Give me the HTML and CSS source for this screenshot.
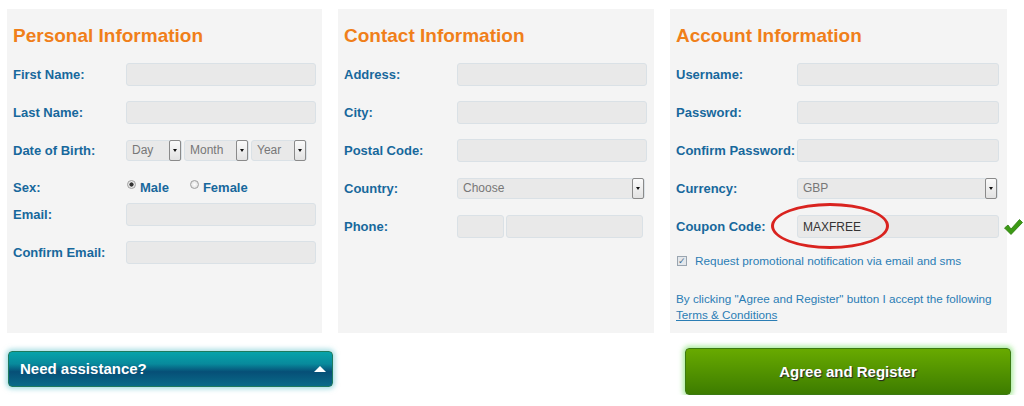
FILE: index.html
```html
<!DOCTYPE html>
<html>
<head>
  <title>Register</title>
  <link rel="stylesheet" href="styles.css">
</head>
<body>
  <div class="page">
    <div class="columns">

      <div class="panel">
        <h2>Personal Information</h2>
        <div class="row">
          <label>First Name:</label>
          <input type="text" class="field">
        </div>
        <div class="row">
          <label>Last Name:</label>
          <input type="text" class="field">
        </div>
        <div class="row">
          <label>Date of Birth:</label>
          <div class="dob">
            <div class="select day"><span class="value">Day</span><span class="arrow"></span></div>
            <div class="select month"><span class="value">Month</span><span class="arrow"></span></div>
            <div class="select year"><span class="value">Year</span><span class="arrow"></span></div>
          </div>
        </div>
        <div class="row sex">
          <label>Sex:</label>
          <div class="radios">
            <span class="radio checked"></span><span class="radio-label">Male</span>
            <span class="radio"></span><span class="radio-label">Female</span>
          </div>
        </div>
        <div class="row">
          <label>Email:</label>
          <input type="text" class="field">
        </div>
        <div class="row">
          <label>Confirm Email:</label>
          <input type="text" class="field">
        </div>
      </div>

      <div class="panel">
        <h2>Contact Information</h2>
        <div class="row">
          <label>Address:</label>
          <input type="text" class="field">
        </div>
        <div class="row">
          <label>City:</label>
          <input type="text" class="field">
        </div>
        <div class="row">
          <label>Postal Code:</label>
          <input type="text" class="field">
        </div>
        <div class="row">
          <label>Country:</label>
          <div class="select wide"><span class="value">Choose</span><span class="arrow"></span></div>
        </div>
        <div class="row">
          <label>Phone:</label>
          <div class="phone">
            <input type="text" class="field code">
            <input type="text" class="field number">
          </div>
        </div>
      </div>

      <div class="panel account">
        <h2>Account Information</h2>
        <div class="row">
          <label>Username:</label>
          <input type="text" class="field">
        </div>
        <div class="row">
          <label>Password:</label>
          <input type="password" class="field">
        </div>
        <div class="row">
          <label>Confirm Password:</label>
          <input type="password" class="field">
        </div>
        <div class="row">
          <label>Currency:</label>
          <div class="select wide"><span class="value">GBP</span><span class="arrow"></span></div>
        </div>
        <div class="row coupon">
          <label>Coupon Code:</label>
          <input type="text" class="field" value="MAXFREE">
          <span class="circle"></span>
          <svg class="tick" width="20" height="18" viewBox="0 0 20 18">
            <path d="M1.5 10 L5 7 L8 11 L16.5 1.5 L19.5 4.5 L8 16.5 Z" fill="#3c9a14" stroke="#2a7a0c" stroke-width="0.8" stroke-linejoin="round"/>
          </svg>
        </div>
        <div class="optin">
          <span class="checkbox">&#10003;</span>
          <span>Request promotional notification via email and sms</span>
        </div>
        <p class="terms">
          By clicking "Agree and Register" button I accept the following<br>
          <a href="#">Terms &amp; Conditions</a>
        </p>
      </div>

    </div>

    <div class="actions">
      <div class="assist">
        <span>Need assistance?</span>
        <span class="up"></span>
      </div>
      <button class="register">Agree and Register</button>
    </div>
  </div>
</body>
</html>
```

FILE: styles.css
```css
body {
  margin: 0;
  font-family: "Liberation Sans", Arial, sans-serif;
  background: #fff;
}

.page {
  padding: 9px 0 0 7px;
}

.columns {
  display: grid;
  grid-template-columns: 315px 316px 337px;
  column-gap: 16px;
}

.panel {
  height: 324px;
  box-sizing: border-box;
  padding: 15px 6px 0 6px;
  background: #f4f4f4;
}

h2 {
  margin: 0 0 15px 0;
  font-size: 19px;
  line-height: 24px;
  color: #f07f1a;
}

.row {
  position: relative;
  display: grid;
  grid-template-columns: 113px 190px;
  align-items: center;
  height: 23px;
  margin-bottom: 15px;
}

.account .row {
  grid-template-columns: 121px 202px;
}

.row label {
  font-size: 13px;
  font-weight: bold;
  color: #17689c;
  white-space: nowrap;
}

.field {
  box-sizing: border-box;
  width: 100%;
  height: 23px;
  margin: 0;
  padding: 0 5px;
  border: 1px solid #dae1e6;
  border-radius: 3px;
  background: #e9e9e9;
  font-family: "Liberation Sans", Arial, sans-serif;
  font-size: 12px;
  color: #333;
}

.select {
  position: relative;
  box-sizing: border-box;
  height: 21px;
  border: 1px solid #dae1e6;
  border-radius: 3px;
  background: #e9e9e9;
  font-size: 12px;
  line-height: 19px;
  color: #777;
}

.select .value {
  padding-left: 5px;
}

.select .arrow {
  position: absolute;
  top: -1px;
  right: 0;
  width: 12px;
  height: 21px;
  box-sizing: border-box;
  border: 1px solid #8a8a8a;
  border-radius: 2px;
  background: linear-gradient(#fafafa, #e2e2e2);
}

.select .arrow::after {
  content: "";
  position: absolute;
  left: 3px;
  top: 8px;
  border-left: 2.5px solid transparent;
  border-right: 2.5px solid transparent;
  border-top: 3px solid #111;
}

.dob {
  display: flex;
  gap: 2px;
}

.dob .day { width: 56px; }
.dob .month { width: 65px; }
.dob .year { width: 56px; }

.select.wide {
  width: 188px;
}

.account .select.wide {
  width: 201px;
}

.row.sex {
  height: 20px;
  margin-bottom: 6px;
}

.radios {
  display: flex;
  align-items: center;
  padding-left: 1px;
  font-size: 13px;
  font-weight: bold;
  color: #17689c;
}

.radio {
  width: 9px;
  height: 9px;
  box-sizing: border-box;
  margin: -6px 4px 0 0;
  border: 1px solid #a0a0a0;
  border-radius: 50%;
  background: radial-gradient(#fff, #d8d8d8);
}

.radio.checked {
  background: radial-gradient(#333 0 1.8px, #e8e8e8 2.4px);
}

.radio-label {
  margin-right: 21px;
}

.phone {
  display: flex;
  gap: 2px;
}

.phone .code { width: 47px; }
.phone .number { width: 137px; }

.coupon .circle {
  position: absolute;
  left: 95px;
  top: -12px;
  width: 118px;
  height: 46px;
  box-sizing: border-box;
  border: 3px solid #d9231f;
  border-radius: 50%;
}

.coupon .tick {
  position: absolute;
  left: 327px;
  top: 3px;
}

.optin {
  display: flex;
  align-items: center;
  margin-top: 15px;
  padding-left: 1px;
  font-size: 11.8px;
  line-height: 16px;
  color: #2b7db4;
}

.checkbox {
  width: 10px;
  height: 10px;
  box-sizing: border-box;
  margin-right: 8px;
  border: 1px solid #9aa5b0;
  background: #e4e8ec;
  font-size: 9px;
  line-height: 8px;
  text-align: center;
  color: #4a6d8a;
}

.terms {
  margin: 22px 0 0 0;
  font-size: 11.7px;
  line-height: 16px;
  color: #2b7db4;
}

.terms a {
  color: #2b7db4;
}

.actions {
  display: flex;
  align-items: flex-start;
  margin-top: 15px;
}

.assist {
  position: relative;
  box-sizing: border-box;
  width: 325px;
  height: 36px;
  margin: 3px 0 0 1px;
  padding-left: 11px;
  border: 1px solid #1f7a5e;
  border-radius: 4px;
  background: linear-gradient(#07a3aa 0%, #088a9c 35%, #064f77 58%, #096b89 100%);
  box-shadow: 0 0 5px 2px rgba(110, 200, 210, 0.6);
  font-size: 15px;
  font-weight: bold;
  line-height: 34px;
  color: #fff;
}

.assist .up {
  position: absolute;
  right: 6px;
  top: 14px;
  border-left: 6px solid transparent;
  border-right: 6px solid transparent;
  border-bottom: 6px solid #fff;
}

.register {
  box-sizing: border-box;
  width: 326px;
  height: 47px;
  margin-left: 352px;
  border: 1px solid #3c7a12;
  border-radius: 4px;
  background: linear-gradient(#68aa00, #3d7c00);
  box-shadow: 0 0 5px 2px rgba(120, 225, 100, 0.65);
  font-family: "Liberation Sans", Arial, sans-serif;
  font-size: 15px;
  font-weight: bold;
  color: #fff;
  text-shadow: 1px 1px 1px #222;
}
```
